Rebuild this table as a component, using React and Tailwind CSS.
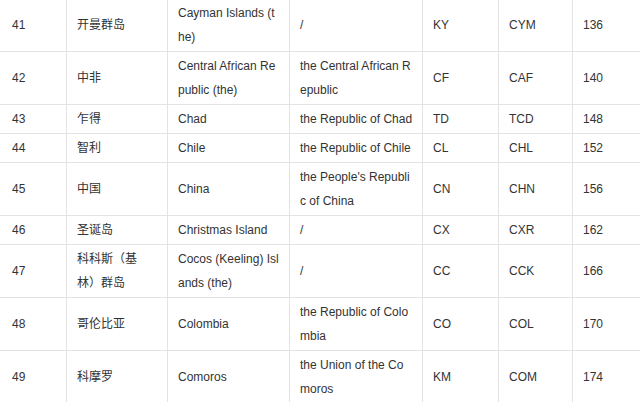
const rows = [
  ["41", ["开曼群岛"], ["Cayman Islands (t", "he)"], ["/"], "KY", "CYM", "136"],
  ["42", ["中非"], ["Central African Re", "public (the)"], ["the Central African R", "epublic"], "CF", "CAF", "140"],
  ["43", ["乍得"], ["Chad"], ["the Republic of Chad"], "TD", "TCD", "148"],
  ["44", ["智利"], ["Chile"], ["the Republic of Chile"], "CL", "CHL", "152"],
  ["45", ["中国"], ["China"], ["the People's Republi", "c of China"], "CN", "CHN", "156"],
  ["46", ["圣诞岛"], ["Christmas Island"], ["/"], "CX", "CXR", "162"],
  ["47", ["科科斯（基", "林）群岛"], ["Cocos (Keeling) Isl", "ands (the)"], ["/"], "CC", "CCK", "166"],
  ["48", ["哥伦比亚"], ["Colombia"], ["the Republic of Colo", "mbia"], "CO", "COL", "170"],
  ["49", ["科摩罗"], ["Comoros"], ["the Union of the Co", "moros"], "KM", "COM", "174"],
];

function Cell({ className, lines }) {
  const list = Array.isArray(lines) ? lines : [lines];
  return (
    <div className={`flex flex-col justify-center py-[2px] leading-[24px] whitespace-nowrap border-r border-[#e3e3e3] ${className}`}>
      {list.map((l, i) => (
        <span key={i}>{l}</span>
      ))}
    </div>
  );
}

export default function App() {
  return (
    <div
      className="w-[640px] h-[402px] overflow-hidden bg-white text-[#333] text-[12px]"
      style={{ fontFamily: '"Liberation Sans", Arial, "Noto Sans CJK SC", sans-serif' }}
    >
      <div className="mt-[-1px] w-[760px]">
        {rows.map((r) => (
          <div key={r[0]} className="flex border-b border-[#e3e3e3]">
            <Cell className="w-[67px] pl-[12px]" lines={r[0]} />
            <Cell className="w-[101px] pl-[10px]" lines={r[1]} />
            <Cell className="w-[122px] pl-[10px]" lines={r[2]} />
            <Cell className="w-[133px] pl-[10px]" lines={r[3]} />
            <Cell className="w-[76px] pl-[10px]" lines={r[4]} />
            <Cell className="w-[74px] pl-[10px]" lines={r[5]} />
            <Cell className="w-[120px] pl-[10px]" lines={r[6]} />
          </div>
        ))}
      </div>
    </div>
  );
}
